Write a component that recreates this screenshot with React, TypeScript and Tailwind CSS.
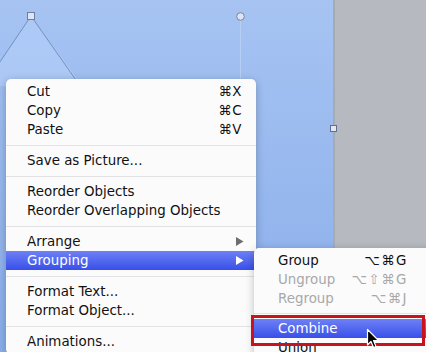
import React from "react";

const font = { fontFamily: '"DejaVu Sans", "Liberation Sans", sans-serif' };

function Arrow({ white }: { white?: boolean }) {
  return (
    <svg width="8" height="9" viewBox="0 0 8 9" className="block">
      <polygon points="0,0 7.5,4.5 0,9" fill={white ? "#ffffff" : "#6e6e6e"} />
    </svg>
  );
}

function Item({
  label,
  shortcut,
  arrow,
  active,
  disabled,
}: {
  label: string;
  shortcut?: string;
  arrow?: boolean;
  active?: boolean;
  disabled?: boolean;
}) {
  return (
    <div
      className={
        "flex h-[19px] items-center justify-between pl-[21px] pr-[12px] " +
        (active
          ? "bg-gradient-to-b from-[#6e80f5] to-[#3a4ee9] text-white"
          : disabled
          ? "text-[#a5a5a5]"
          : "text-[#111]")
      }
    >
      <span className="leading-none">{label}</span>
      {shortcut && <span className="pr-[2px] leading-none tracking-[0.5px]">{shortcut}</span>}
      {arrow && <Arrow white={active} />}
    </div>
  );
}

function SubItem({
  label,
  shortcut,
  active,
  disabled,
}: {
  label: string;
  shortcut?: string;
  active?: boolean;
  disabled?: boolean;
}) {
  return (
    <div
      className={
        "flex h-[19px] items-center justify-between pl-[24px] pr-[26px] " +
        (active
          ? "bg-gradient-to-b from-[#6e80f5] to-[#3a4ee9] text-white"
          : disabled
          ? "text-[#a8a8a8]"
          : "text-[#111]")
      }
    >
      <span className="leading-none">{label}</span>
      {shortcut && <span className="leading-none tracking-[1.5px]">{shortcut}</span>}
    </div>
  );
}

function Sep({ h = 12 }: { h?: number }) {
  return (
    <div className={"flex items-center " + (h === 12 ? "h-[12px]" : "h-[11px]")}>
      <div className="h-px w-full bg-[#e2e2e4]" />
    </div>
  );
}

export default function App() {
  return (
    <div className="relative flex h-[352px] w-[426px] overflow-hidden text-[13.4px]" style={font}>
      {/* slide */}
      <div className="relative w-[333px] bg-gradient-to-b from-[#a6c3f2] to-[#8aaeeb]">
        <svg className="absolute left-0 top-0" width="333" height="352">
          <polygon points="31,16 -15,84 90,96" fill="#b6cff7" opacity="0.55" />
          <line x1="31" y1="16" x2="-15" y2="84" stroke="#7390c2" strokeWidth="1" />
          <line x1="31" y1="16" x2="90" y2="100" stroke="#7390c2" strokeWidth="1" />
          <line x1="240.5" y1="16" x2="240.5" y2="352" stroke="#c6d9f8" strokeWidth="1" opacity="0.6" />
          <rect x="27.5" y="12.5" width="7" height="7" fill="#dfe6f3" stroke="#6c7fa6" />
          <circle cx="240.5" cy="16.5" r="3.8" fill="#dfe5f0" stroke="#7c879a" />
        </svg>
      </div>
      {/* right panel */}
      <div className="flex-1 border-l-2 border-[#a6aab1] bg-[#b6b9c0]" />
      {/* square handle on edge */}
      <div className="absolute left-[330px] top-[125px] h-[7px] w-[7px] border border-[#5d6f99] bg-[#e2e7f0]" />

      {/* main menu */}
      <div className="absolute left-[6px] top-[79px] w-[250px] rounded-[5px] bg-[#fbfbfc] py-[3px] shadow-[0_2px_8px_rgba(0,0,0,0.25)]">
        <Item label="Cut" shortcut="⌘X" />
        <Item label="Copy" shortcut="⌘C" />
        <Item label="Paste" shortcut="⌘V" />
        <Sep />
        <Item label="Save as Picture..." />
        <Sep />
        <Item label="Reorder Objects" />
        <Item label="Reorder Overlapping Objects" />
        <Sep />
        <Item label="Arrange" arrow />
        <Item label="Grouping" arrow active />
        <Sep />
        <Item label="Format Text..." />
        <Item label="Format Object..." />
        <Sep />
        <Item label="Animations..." />
      </div>

      {/* submenu */}
      <div className="absolute left-[254px] top-[248px] w-[180px] rounded-tl-[5px] bg-[#fbfbfc] py-[3px] shadow-[0_2px_8px_rgba(0,0,0,0.25)]">
        <SubItem label="Group" shortcut="⌥⌘G" />
        <SubItem label="Ungroup" shortcut="⌥⇧⌘G" disabled />
        <SubItem label="Regroup" shortcut="⌥⌘J" disabled />
        <Sep h={11} />
        <SubItem label="Combine" active />
        <SubItem label="Union" />
      </div>

      {/* red highlight box */}
      <div className="absolute left-[251px] top-[315px] h-[31px] w-[174px] border-[3px] border-[#c8131c]" />

      {/* cursor */}
      <svg className="absolute left-[366px] top-[328px]" width="14" height="22" viewBox="0 0 14 22">
        <path
          d="M1.5 1.5 L1.5 17 L5 13.5 L7.5 19.5 L10 18.5 L7.5 12.5 L12.5 12.5 Z"
          fill="#000"
          stroke="#fff"
          strokeWidth="1.2"
          strokeLinejoin="round"
        />
      </svg>
    </div>
  );
}
